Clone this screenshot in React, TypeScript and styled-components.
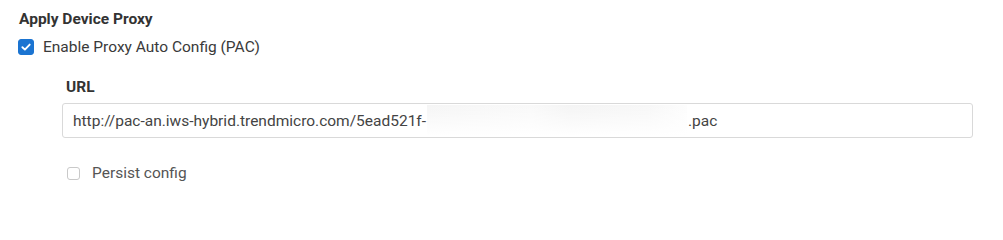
import React from "react";
import styled, { createGlobalStyle } from "styled-components";

const GlobalStyle = createGlobalStyle`
  html, body {
    margin: 0;
    padding: 0;
    background: #ffffff;
  }
  body {
    font-family: Roboto, "Liberation Sans", sans-serif;
    -webkit-font-smoothing: antialiased;
  }
`;

const App = () => {
  return (
    <>
      <GlobalStyle />
      <Page>
        <SectionTitle>Apply Device Proxy</SectionTitle>
        <CheckRow>
          <CheckBox checked>
            <svg width="12" height="12" viewBox="0 0 12 12">
              <path
                d="M2.4 6.2 L4.9 8.6 L9.7 3.6"
                fill="none"
                stroke="#fff"
                strokeWidth="1.9"
                strokeLinecap="round"
                strokeLinejoin="round"
              />
            </svg>
          </CheckBox>
          <CheckLabel>Enable Proxy Auto Config (PAC)</CheckLabel>
        </CheckRow>
        <Nested>
          <FieldLabel>URL</FieldLabel>
          <TextField>
            <span>http://pac-an.iws-hybrid.trendmicro.com/5ead521f-</span>
            <Redacted />
            <span>.pac</span>
          </TextField>
          <CheckRow small>
            <CheckBox />
            <CheckLabel muted>Persist config</CheckLabel>
          </CheckRow>
        </Nested>
      </Page>
    </>
  );
};

export default App;

const Page = styled.div`
  width: 1003px;
  height: 200px;
  box-sizing: border-box;
  padding: 10px 30px 0 18px;
  display: flex;
  flex-direction: column;
`;

const SectionTitle = styled.div`
  font-size: 15.5px;
  font-weight: 700;
  color: #333333;
  line-height: 18px;
  padding-left: 1px;
`;

const CheckRow = styled.div<{ small?: boolean }>`
  display: flex;
  align-items: center;
  gap: ${({ small }) => (small ? "12px" : "9px")};
  margin-top: ${({ small }) => (small ? "26px" : "10px")};
  padding-left: ${({ small }) => (small ? "5px" : "0")};
`;

const CheckBox = styled.span<{ checked?: boolean }>`
  width: ${({ checked }) => (checked ? "16px" : "13px")};
  height: ${({ checked }) => (checked ? "16px" : "13px")};
  box-sizing: border-box;
  border-radius: 3px;
  background: ${({ checked }) => (checked ? "#1b74d1" : "#ffffff")};
  border: 1px solid ${({ checked }) => (checked ? "#1b74d1" : "#c9c9c9")};
  display: flex;
  align-items: center;
  justify-content: center;
`;

const CheckLabel = styled.span<{ muted?: boolean }>`
  font-size: 15.5px;
  line-height: 18px;
  color: ${({ muted }) => (muted ? "#555555" : "#3a3a3a")};
`;

const Nested = styled.div`
  display: flex;
  flex-direction: column;
  padding-left: 44px;
  margin-top: 22px;
`;

const FieldLabel = styled.div`
  font-size: 15.5px;
  font-weight: 700;
  color: #333333;
  line-height: 18px;
  padding-left: 4px;
`;

const TextField = styled.div`
  margin-top: 7px;
  height: 35px;
  box-sizing: border-box;
  border: 1px solid #d9d9d9;
  border-radius: 3px;
  padding: 0 10px;
  display: flex;
  align-items: center;
  font-size: 15.5px;
  color: #444444;
  white-space: nowrap;
`;

const Redacted = styled.span`
  display: inline-block;
  width: 260px;
  height: 31px;
  margin: 0 1px 0 1px;
  background:
    linear-gradient(to bottom, rgba(255, 255, 255, 0) 0%, #ffffff 100%),
    linear-gradient(
      to right,
      #f5f5f5 0%,
      #f9f9f9 40%,
      #f4f4f4 55%,
      #f7f7f7 85%,
      #fdfdfd 100%
    );
`;
